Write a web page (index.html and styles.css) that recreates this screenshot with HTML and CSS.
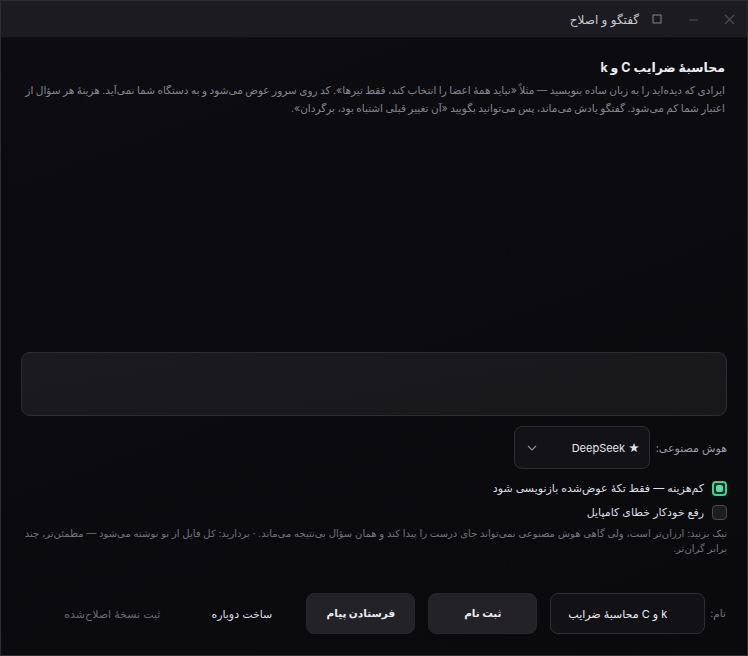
FILE: index.html
```html
<!DOCTYPE html>
<html lang="fa" dir="rtl">
<head>
<meta charset="utf-8">
<title>گفتگو و اصلاح</title>
<link rel="stylesheet" href="styles.css">
</head>
<body>
<div class="window">
	<div class="titlebar">
		<span class="win-btn close">
			<svg width="11" height="11" viewBox="0 0 11 11"><path d="M1 1L10 10M10 1L1 10" stroke="currentColor" stroke-width="1.1" fill="none"/></svg>
		</span>
		<span class="win-btn">
			<svg width="11" height="11" viewBox="0 0 11 11"><path d="M1 6H10" stroke="currentColor" stroke-width="1.1" fill="none"/></svg>
		</span>
		<span class="win-btn max">
			<svg width="10" height="10" viewBox="0 0 10 10"><rect x="1" y="1" width="8" height="8" stroke="currentColor" stroke-width="1" fill="none"/></svg>
		</span>
		<span class="title">گفتگو و اصلاح</span>
	</div>

	<div class="content">
		<h1>محاسبهٔ ضرایب C و k</h1>
		<p class="intro">ایرادی که دیده‌اید را به زبان ساده بنویسید — مثلاً «نباید همهٔ اعضا را انتخاب کند، فقط تیرها». کد روی سرور عوض می‌شود و به دستگاه شما نمی‌آید. هزینهٔ هر سؤال از اعتبار شما کم می‌شود. گفتگو یادش می‌ماند، پس می‌توانید بگویید «آن تغییر قبلی اشتباه بود، برگردان».</p>

		<div class="log"></div>

		<textarea class="message"></textarea>

		<div class="ai-row">
			<span class="label">هوش مصنوعی:</span>
			<div class="select">
				<span>★ DeepSeek</span>
				<svg class="chevron" width="10" height="6" viewBox="0 0 10 6"><path d="M1 1L5 5L9 1" stroke="currentColor" stroke-width="1.2" fill="none"/></svg>
			</div>
		</div>

		<label class="check on"><span class="box"></span>کم‌هزینه — فقط تکهٔ عوض‌شده بازنویسی شود</label>
		<label class="check"><span class="box"></span>رفع خودکار خطای کامپایل</label>

		<p class="hint">تیک بزنید: ارزان‌تر است، ولی گاهی هوش مصنوعی نمی‌تواند جای درست را پیدا کند و همان سؤال بی‌نتیجه می‌ماند. · بردارید: کل فایل از نو نوشته می‌شود — مطمئن‌تر، چند برابر گران‌تر.</p>

		<div class="actions">
			<span class="label">نام:</span>
			<div class="name-field" dir="ltr">محاسبهٔ ضرایب C و k</div>
			<button class="btn">ثبت نام</button>
			<button class="btn">فرستادن پیام</button>
			<button class="btn flat">ساخت دوباره</button>
			<button class="btn flat off">ثبت نسخهٔ اصلاح‌شده</button>
		</div>
	</div>
</div>
</body>
</html>
```

FILE: styles.css
```css
html, body
{
	margin: 0;
	height: 100%;
	background: #0b0b0e;
}
body
{
	font-family: Inter, "DejaVu Sans", sans-serif;
	color: #d6d6dc;
}
.window
{
	box-sizing: border-box;
	height: 656px;
	display: flex;
	flex-direction: column;
	border: 1px solid #2c2c33;
	background: linear-gradient(160deg, #0d0d11 0%, #0a0a0d 100%);
}

/* title bar */
.titlebar
{
	height: 36px;
	flex: none;
	display: flex;
	align-items: center;
	background: #1b1b20;
	border-bottom: 1px solid #101014;
}
.win-btn
{
	width: 36px;
	display: flex;
	justify-content: center;
	color: #4c4c55;
}
.win-btn.max
{
	color: #85858e;
}
.titlebar .title
{
	font-size: 12px;
	color: #c9c9d2;
}

/* page body */
.content
{
	flex: 1;
	display: flex;
	flex-direction: column;
	padding: 0 20px 21px 20px;
}
h1
{
	margin: 22px 2px 0 0;
	font-size: 12.5px;
	font-weight: bold;
	color: #ececf0;
}
.intro
{
	margin: 7px 2px 0 0;
	font-size: 10.5px;
	line-height: 18px;
	word-spacing: -0.5px;
	color: #85858f;
}
.log
{
	flex: 1;
}
.message
{
	box-sizing: border-box;
	height: 64px;
	resize: none;
	background: linear-gradient(170deg, #1b1b1f, #18181b);
	border: 1px solid #2d2d33;
	border-radius: 9px;
	outline: none;
}

.label
{
	font-size: 11px;
	color: #9a9aa3;
}
.ai-row
{
	display: flex;
	align-items: center;
	gap: 6px;
	margin-top: 10px;
}
.select
{
	box-sizing: border-box;
	width: 136px;
	height: 43px;
	display: flex;
	align-items: center;
	justify-content: space-between;
	padding: 0 9px 0 12px;
	background: #131317;
	border: 1px solid #2d2d33;
	border-radius: 8px;
	font-size: 11px;
	color: #e4e4ea;
}
.select .chevron
{
	color: #8d8d96;
}

.check
{
	display: flex;
	align-items: center;
	gap: 8px;
	font-size: 11px;
	color: #dcdce2;
	margin-top: 6px;
	height: 18px;
}
.ai-row + .check
{
	margin-top: 10px;
}
.check .box
{
	box-sizing: border-box;
	width: 15px;
	height: 15px;
	border: 1px solid #4a4a52;
	border-radius: 4px;
	background: #1c1c21;
	display: flex;
	align-items: center;
	justify-content: center;
}
.check.on .box
{
	border: 2px solid #38d397;
	background: #0f2a20;
}
.check.on .box::after
{
	content: "";
	width: 7px;
	height: 7px;
	border-radius: 2px;
	background: #4fe3ab;
}

.hint
{
	margin: 5px 0 0 0;
	font-size: 10px;
	line-height: 15px;
	color: #73737c;
}

.actions
{
	display: flex;
	align-items: center;
	gap: 13px;
	margin-top: 37px;
}
.actions .label
{
	font-size: 10.5px;
	color: #74747d;
	margin-left: -8px;
	margin-right: 1px;
}
.name-field
{
	box-sizing: border-box;
	width: 155px;
	height: 41px;
	display: flex;
	align-items: center;
	padding-left: 17px;
	background: #121216;
	border: 1px solid #2d2d33;
	border-radius: 8px;
	font-size: 11px;
	color: #ececf0;
}
.btn
{
	width: 109px;
	height: 41px;
	font-family: inherit;
	font-size: 10.5px;
	font-weight: bold;
	color: #eaeaef;
	background: #222227;
	border: 1px solid #26262c;
	border-radius: 8px;
}
.btn.flat
{
	width: auto;
	padding: 0 21px;
	background: none;
	border: none;
	font-size: 11px;
	font-weight: normal;
	color: #dcdce2;
}
.btn.off
{
	padding: 0 17px;
	color: #6a6a72;
}
```
